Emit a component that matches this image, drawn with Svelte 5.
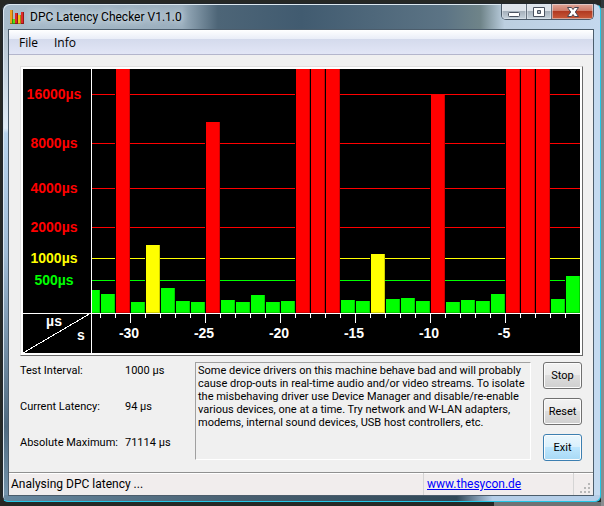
<script lang="ts">
  type Bar = { top: number; color: string };

  const LEFT = 69;
  const BASE = 244;
  const PITCH = 15;

  const red = '#ff0000';
  const yellow = '#ffff00';
  const green = '#00ff00';

  const limits = [
    { label: '16000µs', y: 25, color: red },
    { label: '8000µs', y: 74, color: red },
    { label: '4000µs', y: 119, color: red },
    { label: '2000µs', y: 158, color: red },
    { label: '1000µs', y: 189, color: yellow },
    { label: '500µs', y: 211, color: green }
  ];

  // top edge of each bar, oldest sample first
  const tops = [
    221, 225, 0, 233, 176, 219, 232, 233, 53, 231, 233, 226, 233, 232, 0, 0, 0,
    231, 232, 185, 230, 229, 232, 26, 233, 231, 232, 225, 0, 0, 0, 230, 207
  ];

  const bars: Bar[] = tops.map((top) => ({
    top,
    color: top < 158 ? red : top < 189 ? yellow : green
  }));

  const ticks = bars.slice(1).map((_, i) => ({
    x: LEFT + 8 + i * PITCH,
    seconds: i - 32,
    major: (i - 2) % 5 === 0
  }));

  const readings = [
    { name: 'Test Interval:', value: '1000 µs' },
    { name: 'Current Latency:', value: '94 µs' },
    { name: 'Absolute Maximum:', value: '71114 µs' }
  ];
</script>

<div class="desktop">
  <div class="window">
    <header class="titlebar">
      <svg class="app-icon" width="16" height="16" viewBox="0 0 16 16" aria-hidden="true">
        <path d="M1 1h3v14h-3z" fill="#a86a10" />
        <path d="M1 1h2v13h-2z" fill="#f0a020" />
        <path d="M3 10h3v5h-3z" fill="#309018" />
        <path d="M4 10h2v4h-2z" fill="#58e010" />
        <path d="M6 4h3v11h-3z" fill="#901818" />
        <path d="M6 4h2v10h-2z" fill="#e02828" />
        <path d="M9 6h3v9h-3z" fill="#a08810" />
        <path d="M9 6h2v8h-2z" fill="#e8c820" />
        <path d="M12 3h3v12h-3z" fill="#901818" />
        <path d="M12 3h2v11h-2z" fill="#e02828" />
      </svg>
      <h1>DPC Latency Checker V1.1.0</h1>
      <div class="caption-buttons">
        <button class="caption" aria-label="Minimize">
          <svg width="14" height="12" viewBox="0 0 14 12">
            <rect x="1.5" y="6.5" width="11" height="4" rx="1" fill="#fff" stroke="#4a5260" />
          </svg>
        </button>
        <button class="caption" aria-label="Maximize">
          <svg width="14" height="12" viewBox="0 0 14 12">
            <path d="M1.5 1.5h11v9h-11zM5.500 4.500h3v3h-3z" fill="#fff" fill-rule="evenodd" stroke="#4a5260" />
          </svg>
        </button>
        <button class="caption close" aria-label="Close">
          <svg width="14" height="12" viewBox="0 0 14 12">
            <path
              d="M1.500 1.500h4L7 3.500l1.500-2h4L9.300 6l3.200 4.500h-4L7 8.500l-1.500 2h-4L4.700 6z"
              fill="#fff" stroke="#4a4450" stroke-linejoin="round" />
          </svg>
        </button>
      </div>
    </header>

    <div class="client">
      <nav class="menu">
        <button>File</button>
        <button>Info</button>
      </nav>

      <main>
        <div class="chart-frame">
          <svg class="chart" viewBox="0 0 557 284" role="img" aria-label="DPC latency over time" shape-rendering="crispEdges">
            <rect width="557" height="284" fill="#000" />
            {#each limits as limit}
              <rect x={LEFT} y={limit.y} width="488" height="1" fill={limit.color} />
              <text x="31" y={limit.y + 5} fill={limit.color}>{limit.label}</text>
            {/each}

            <svg x={LEFT} width="488" height="284" viewBox="69 0 488 284">
              {#each bars as bar, i}
                {@const x = LEFT - 6 + i * PITCH}
                <rect x={x - 1} y={bar.top} width="1" height={BASE - bar.top} fill="#000" />
                <rect {x} y={bar.top} width="14" height={BASE - bar.top} fill={bar.color} />
                <path d="M{x + 13} {bar.top}h1v{BASE - bar.top}h-14v-1h13z" fill="#000" opacity=".2" />
              {/each}
            </svg>

            <rect y="244" width="557" height="1" fill="#fff" />
            <rect x="68" width="1" height="284" fill="#fff" />
            <path d="M0 284L68 244" stroke="#fff" />
            {#each ticks as tick}
              <rect x={tick.x} y="245" width="1" height={tick.major ? 9 : 4} fill="#fff" />
              {#if tick.major}
                <text x={tick.x - 1} y="269" fill="#fff">{tick.seconds}</text>
              {/if}
            {/each}
            <text x="31" y="257" fill="#fff">µs</text>
            <text x="58" y="271" fill="#fff">s</text>
          </svg>
        </div>

        <section class="details">
          <dl>
            {#each readings as reading}
              <div>
                <dt>{reading.name}</dt>
                <dd>{reading.value}</dd>
              </div>
            {/each}
          </dl>
          <p class="advice">
            Some device drivers on this machine behave bad and will probably
            cause drop-outs in real-time audio and/or video streams. To isolate
            the misbehaving driver use Device Manager and disable/re-enable
            various devices, one at a time. Try network and W-LAN adapters,
            modems, internal sound devices, USB host controllers, etc.
          </p>
          <div class="actions">
            <button>Stop</button>
            <button>Reset</button>
            <button class="hot">Exit</button>
          </div>
        </section>
      </main>

      <footer>
        <span class="status">Analysing DPC latency ...</span>
        <span class="site"><a href="http://www.thesycon.de">www.thesycon.de</a></span>
        <svg class="grip" width="12" height="12" viewBox="0 0 12 12" aria-hidden="true">
          <path d="M8 1h2v2H8zM8 5h2v2H8zM8 9h2v2H8zM4 5h2v2H4zM4 9h2v2H4zM0 9h2v2H0z" fill="#b8b8b8" />
        </svg>
      </footer>
    </div>
  </div>
</div>

<style>
  :global(body) {
    background: #262825;
  }

  .desktop {
    box-sizing: border-box;
    min-height: 100vh;
    padding: 3px 3px 4px 2px;
    display: flex;
    background:
      linear-gradient(#30383c 0 8px, transparent 8px) right / 3px 100% no-repeat,
      linear-gradient(#8a8d90, #8a8d90) right / 3px 100% no-repeat,
      linear-gradient(#707274, #707274) right bottom / 110px 4px no-repeat,
      #262825;
    font-family: Roboto, Tahoma, sans-serif;
    font-size: 11px;
    color: #000;
  }

  .window {
    box-sizing: border-box;
    flex: 1;
    display: flex;
    flex-direction: column;
    padding: 0 6px 5px 5px;
    border: 1px solid #20262c;
    border-right-color: #22c8e8;
    border-bottom-color: #22c8e8;
    border-radius: 7px 7px 6px 6px;
    box-shadow: inset 1px 1px 0 #dce8f0;
    background:
      linear-gradient(90deg, #a8bccb 0, #9aaebd 30%, #4d6577 36%, #415b70 50%, #5c7485 74%, #6f8489 80%, #bccfe0 84%, #c4d8ee 100%) top / 100% 26px no-repeat,
      linear-gradient(90deg, #6888a0 0, #485f70 40%, #304858 76%, #b5cee8 82%) bottom / 100% 6px no-repeat,
      linear-gradient(#a8b8c4 0, #e0ecf8 25%, #b8d4ee 26%, #a0bcd6 50%, #4f6a80 85%, #7898b0 100%) left / 50% 100% no-repeat,
      #c4daf0;
  }

  .titlebar {
    display: flex;
    align-items: center;
    gap: 5px;
    height: 25px;
    padding-left: 1px;
  }

  h1 {
    flex: 1;
    margin: 0;
    font: 12px Roboto, 'Segoe UI', sans-serif;
    text-shadow: 0 0 6px #dfe8ee, 0 0 8px #dfe8ee;
  }

  .caption-buttons {
    align-self: flex-start;
    display: flex;
    border: 1px solid #4a5968;
    border-top: 0;
    border-radius: 0 0 5px 5px;
    overflow: hidden;
  }

  .caption {
    width: 25px;
    height: 15px;
    padding: 0;
    display: grid;
    place-items: center;
    border: 0;
    border-right: 1px solid #66717d;
    background: linear-gradient(#dde3ea 0 45%, #a4afba 46%, #c6d2dc);
    box-shadow: inset 0 0 0 1px #e8eef480;
  }

  .caption.close {
    width: 41px;
    border-right: 0;
    background: linear-gradient(#e0a698 0, #cf7c6a 45%, #b03820 46%, #c95a3a);
  }

  .client {
    flex: 1;
    display: flex;
    flex-direction: column;
    border: 1px solid #4c5d6c;
    background: #f0f0f0;
  }

  .menu {
    display: flex;
    height: 24px;
    padding-left: 2px;
    border-bottom: 1px solid #b4b6cc;
    background: linear-gradient(#fff 0, #eaeef8 36%, #d4daec 37%, #e2e6f6);
  }

  .menu button {
    padding: 0 8px;
    border: 0;
    background: none;
    font: 12px 'Open Sans', 'Segoe UI', sans-serif;
  }

  main {
    flex: 1;
    padding: 11px 10px 0 11px;
  }

  .chart-frame {
    border: 1px solid #e0e0e0;
    border-right-color: #696969;
    border-bottom-color: #696969;
    padding: 2px;
    background: #fff;
  }

  .chart {
    display: block;
    width: 100%;
    font: bold 14px 'Liberation Sans', Arial, sans-serif;
    text-anchor: middle;
  }

  .details {
    display: flex;
    padding-top: 6px;
  }

  dl {
    width: 175px;
    margin: 0;
  }

  dl div {
    display: flex;
    height: 36px;
    line-height: 18px;
  }

  dt {
    width: 105px;
  }

  dd {
    margin: 0;
  }

  .advice {
    flex: 1;
    box-sizing: border-box;
    height: 98px;
    margin: 0;
    padding: 1px 2px;
    border: 1px solid #a0a0a0;
    border-right-color: #fff;
    border-bottom-color: #fff;
    line-height: 13px;
  }

  .actions {
    display: flex;
    flex-direction: column;
    gap: 9px;
    margin: 0 1px 0 12px;
  }

  .actions button {
    width: 39px;
    height: 27px;
    padding: 0;
    border: 1px solid #707070;
    border-radius: 3px;
    background: linear-gradient(#f2f2f2 0, #ebebeb 49%, #dddddd 50%, #cfcfcf);
    box-shadow: inset 0 0 0 1px #fcfcfc;
    font: inherit;
  }

  .actions .hot {
    border-color: #3c7fb1;
    background: linear-gradient(#eaf6fd 0, #d9f0fc 49%, #bee6fd 50%, #a7d9f5);
  }

  footer {
    display: flex;
    height: 22px;
    border-top: 1px solid #909090;
    background: #f1eded;
    font-size: 12px;
    line-height: 22px;
    box-shadow: inset 0 1px 0 #fff;
  }

  .status {
    flex: 1;
    padding-left: 2px;
  }

  .site {
    box-sizing: border-box;
    width: 151px;
    padding-left: 3px;
    border: solid #d5d5d5;
    border-width: 0 1px;
  }

  a {
    color: #0000ff;
  }

  .grip {
    align-self: flex-end;
    margin: 0 1px 1px 6px;
  }
</style>
